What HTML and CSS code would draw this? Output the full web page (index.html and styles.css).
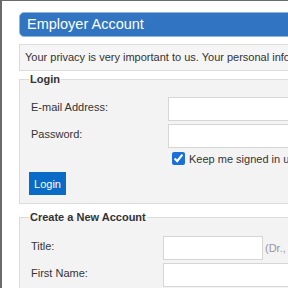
FILE: index.html
```html
<!DOCTYPE html>
<html>
<head>
<meta charset="utf-8">
<link rel="stylesheet" href="styles.css">
</head>
<body>
<div class="frame">
  <div class="page">
    <div class="header">Employer Account</div>
    <div class="privacy">Your privacy is very important to us. Your personal information will never be shared.</div>

    <fieldset class="box login">
      <legend>Login</legend>
      <div class="row">
        <label class="lbl lbl-login">E-mail Address:</label>
        <input class="field" type="text">
      </div>
      <div class="row">
        <label class="lbl lbl-login">Password:</label>
        <input class="field" type="password">
      </div>
      <div class="row check-row">
        <span class="lbl lbl-login"></span>
        <label class="keep"><input type="checkbox" checked class="cb"> Keep me signed in unless I sign out</label>
      </div>
      <button class="btn">Login</button>
    </fieldset>

    <fieldset class="box create">
      <legend>Create a New Account</legend>
      <div class="row">
        <label class="lbl lbl-create">Title:</label>
        <input class="field short" type="text">
        <span class="hint">(Dr., Mr., Mrs., Ms.)</span>
      </div>
      <div class="row">
        <label class="lbl lbl-create">First Name:</label>
        <input class="field" type="text">
      </div>
    </fieldset>
  </div>
</div>
</body>
</html>
```
FILE: styles.css
```css
html, body {
  margin: 0;
  padding: 0;
  background: #fff;
  overflow: hidden;
}
body {
  font-family: "Liberation Sans", Arial, sans-serif;
  font-size: 11px;
  color: #333;
}
.frame {
  border-top: 1px solid #6a6a6a;
  border-left: 2px solid #6a6a6a;
  height: 300px;
  width: 900px;
}
.page {
  padding: 11px 0 0 17px;
  width: 700px;
}
.header {
  height: 23px;
  line-height: 23px;
  background: #3174c2;
  border: 1px solid #8fb6de;
  border-radius: 5px;
  color: #fff;
  font-size: 14.5px;
  padding-left: 7px;
}
.privacy {
  margin-top: 7px;
  height: 25px;
  line-height: 25px;
  background: #f5f5f5;
  border: 1px solid #dcdcdc;
  padding-left: 5px;
}
.box {
  margin: 0;
  background: #f3f3f3;
  border: 1px solid #dcdcdc;
  padding: 0 0 8px 11px;
}
.box legend {
  font-weight: bold;
  color: #333;
  padding: 0 1px;
  margin-left: -2px;
}
.login {
  margin-top: 2px;
  padding-top: 12px;
}
.create {
  margin-top: 7px;
  padding-top: 13px;
}
.row {
  display: flex;
  align-items: flex-start;
  margin-bottom: 3px;
}
.lbl {
  flex: none;
  padding-top: 4px;
}
.lbl-login { width: 137px; }
.lbl-create { width: 132px; }
.field {
  box-sizing: border-box;
  height: 24px;
  width: 400px;
  margin: 0;
  border: 1px solid #d6d6d6;
  background: #fff;
}
.field.short { width: 100px; }
.hint {
  color: #999;
  padding: 6px 0 0 2px;
}
.check-row {
  margin-top: 4px;
  margin-bottom: 7px;
}
.keep {
  display: flex;
  align-items: center;
  white-space: nowrap;
  font-size: 11px;
}
.cb {
  width: 13px;
  height: 13px;
  margin: 0 4px 0 4px;
  accent-color: #1a6fd8;
}
.btn {
  display: block;
  margin-left: -2px;
  height: 23px;
  width: 37px;
  padding: 0;
  border: none;
  background: #0a6bc6;
  color: #fff;
  font-family: "Liberation Sans", Arial, sans-serif;
  font-size: 11px;
}
```
